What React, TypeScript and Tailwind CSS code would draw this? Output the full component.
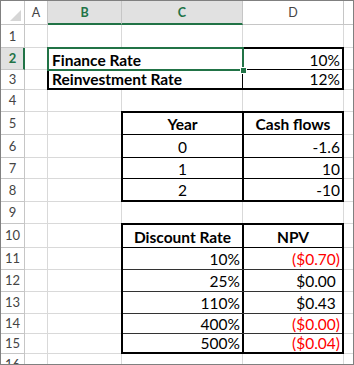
import React from "react";

const COLS = ["A", "B", "C", "D", "E"];
const ROWS = Array.from({ length: 16 }, (_, i) => i + 1);

function covered(r: number, c: number) {
  if ((r === 2 || r === 3) && c >= 1 && c <= 3) return true;
  if (r >= 5 && r <= 8 && (c === 2 || c === 3)) return true;
  if (r >= 10 && r <= 15 && (c === 2 || c === 3)) return true;
  return false;
}

function ColHeader({ label }: { label: string }) {
  const sel = label === "B" || label === "C";
  if (label === "E")
    return <div className="border-b border-[#c6c6c6] bg-white" />;
  return (
    <div
      className={
        sel
          ? "flex items-center justify-center border-r border-[#c6c6c6] border-b-2 border-b-[#217346] bg-[#e1e1e1] pt-[1px] text-[12.5px] font-bold text-[#217346]"
          : "flex items-center justify-center border-r border-b border-[#c6c6c6] bg-white text-[12.5px] text-[#444]"
      }
    >
      {label}
    </div>
  );
}

function RowHeader({ n }: { n: number }) {
  const sel = n === 2;
  return (
    <div
      className={
        sel
          ? "flex items-center justify-center border-b border-[#c6c6c6] border-r-2 border-r-[#217346] bg-[#e1e1e1] pl-[1px] text-[13px] font-bold text-[#217346]"
          : "flex items-center justify-center border-r border-b border-[#c6c6c6] bg-white text-[13px] text-[#444]"
      }
    >
      {n}
    </div>
  );
}

function Red({ v }: { v: string }) {
  return <span className="text-[#ff0000]">{v}</span>;
}

function Pos({ v }: { v: string }) {
  return (
    <span>
      {v}
      <span className="invisible">)</span>
    </span>
  );
}

export default function App() {
  const cells: React.ReactNode[] = [];
  cells.push(
    <div key="corner" className="relative border-r border-b border-[#c6c6c6] bg-white">
      <svg className="absolute left-0 top-0" width="23" height="23" viewBox="0 0 23 23">
        <polygon points="20,9 20,20 9,20" fill="#d6d6d6" />
      </svg>
    </div>
  );
  COLS.forEach((c) => cells.push(<ColHeader key={"h" + c} label={c} />));
  ROWS.forEach((r) => {
    cells.push(<RowHeader key={"r" + r} n={r} />);
    COLS.forEach((c, ci) => {
      if (covered(r, ci)) return;
      cells.push(
        <div
          key={"c" + r + c}
          className={
            ci === 4
              ? "border-b border-[#d9d9d9] bg-white"
              : "border-r border-b border-[#d9d9d9] bg-white"
          }
        />
      );
    });
  });

  return (
    <div className="h-[365px] w-[354px] overflow-hidden border border-[#808080] bg-white font-['Lato',sans-serif] text-[15.5px] leading-[17px] text-black">
      <div className="grid grid-cols-[24px_23px_74px_121px_101px_9px] grid-rows-[24px_23px_22px_20px_22px_23px_23px_21px_23px_22px_24px_22px_22px_22px_20px_20px_22px]">
        {cells}

        {/* B2:D3 */}
        <div className="relative z-10 col-start-3 col-end-6 row-start-3 row-end-5 -ml-px -mt-px flex flex-col border-2 border-black bg-white">
          <div className="flex h-[21px] border-b border-black">
            <div className="flex w-[194px] items-center border-r border-black pl-[3px] pt-[2px] font-bold">
              Finance Rate
            </div>
            <div className="flex flex-1 items-center justify-end pr-[2px] pt-[2px]">10%</div>
          </div>
          <div className="flex flex-1">
            <div className="flex w-[194px] items-center border-r border-black pl-[3px] pt-[1px] font-bold">
              Reinvestment Rate
            </div>
            <div className="flex flex-1 items-center justify-end pr-[2px] pt-[1px]">12%</div>
          </div>
          <div className="absolute left-[-2px] top-[-2px] h-[24px] w-[197px] border-2 border-[#217346]" />
          <div className="absolute left-[191px] top-[18px] h-[7px] w-[7px] border border-white bg-[#217346]" />
        </div>

        {/* C5:D8 */}
        <div className="relative z-10 col-start-4 col-end-6 row-start-6 row-end-10 -ml-px -mt-px flex flex-col border-2 border-black bg-white">
          <div className="flex h-[22px] border-b border-black font-bold">
            <div className="flex w-[121px] items-center justify-center border-r-2 border-black pt-[2px]">Year</div>
            <div className="flex flex-1 items-center justify-center pt-[2px]">Cash flows</div>
          </div>
          <div className="flex h-[23px] border-b border-black">
            <div className="flex w-[121px] items-center justify-center border-r-2 border-black pt-[2px]">0</div>
            <div className="flex flex-1 items-center justify-end pr-[2px] pt-[2px]">-1.6</div>
          </div>
          <div className="flex h-[21px] border-b border-black">
            <div className="flex w-[121px] items-center justify-center border-r-2 border-black pt-[2px]">1</div>
            <div className="flex flex-1 items-center justify-end pr-[2px] pt-[2px]">10</div>
          </div>
          <div className="flex flex-1">
            <div className="flex w-[121px] items-center justify-center border-r-2 border-black pt-[2px]">2</div>
            <div className="flex flex-1 items-center justify-end pr-[2px] pt-[2px]">-10</div>
          </div>
        </div>

        {/* C10:D15 */}
        <div className="relative z-10 col-start-4 col-end-6 row-start-11 row-end-17 -ml-px -mt-px flex flex-col border-2 border-black bg-white">
          <div className="flex h-[23px] border-b border-black font-bold">
            <div className="flex w-[121px] items-center justify-center border-r-2 border-black pt-[2px]">Discount Rate</div>
            <div className="flex flex-1 items-center justify-center pt-[2px]">NPV</div>
          </div>
          <div className="flex h-[22px] border-b border-[#333]">
            <div className="flex w-[121px] items-center justify-end border-r-2 border-black pr-[2px] pt-[2px]">10%</div>
            <div className="flex flex-1 items-center justify-end pr-[2px] pt-[2px]"><Red v="($0.70)" /></div>
          </div>
          <div className="flex h-[22px] border-b border-[#333]">
            <div className="flex w-[121px] items-center justify-end border-r-2 border-black pr-[2px] pt-[2px]">25%</div>
            <div className="flex flex-1 items-center justify-end pr-[2px] pt-[2px]"><Pos v="$0.00" /></div>
          </div>
          <div className="flex h-[22px] border-b border-[#333]">
            <div className="flex w-[121px] items-center justify-end border-r-2 border-black pr-[2px] pt-[2px]">110%</div>
            <div className="flex flex-1 items-center justify-end pr-[2px] pt-[2px]"><Pos v="$0.43" /></div>
          </div>
          <div className="flex h-[20px] border-b border-[#333]">
            <div className="flex w-[121px] items-center justify-end border-r-2 border-black pr-[2px] pt-[2px]">400%</div>
            <div className="flex flex-1 items-center justify-end pr-[2px] pt-[2px]"><Red v="($0.00)" /></div>
          </div>
          <div className="flex flex-1">
            <div className="flex w-[121px] items-center justify-end border-r-2 border-black pr-[2px] pt-[1px]">500%</div>
            <div className="flex flex-1 items-center justify-end pr-[2px] pt-[1px]"><Red v="($0.04)" /></div>
          </div>
        </div>
      </div>
    </div>
  );
}
